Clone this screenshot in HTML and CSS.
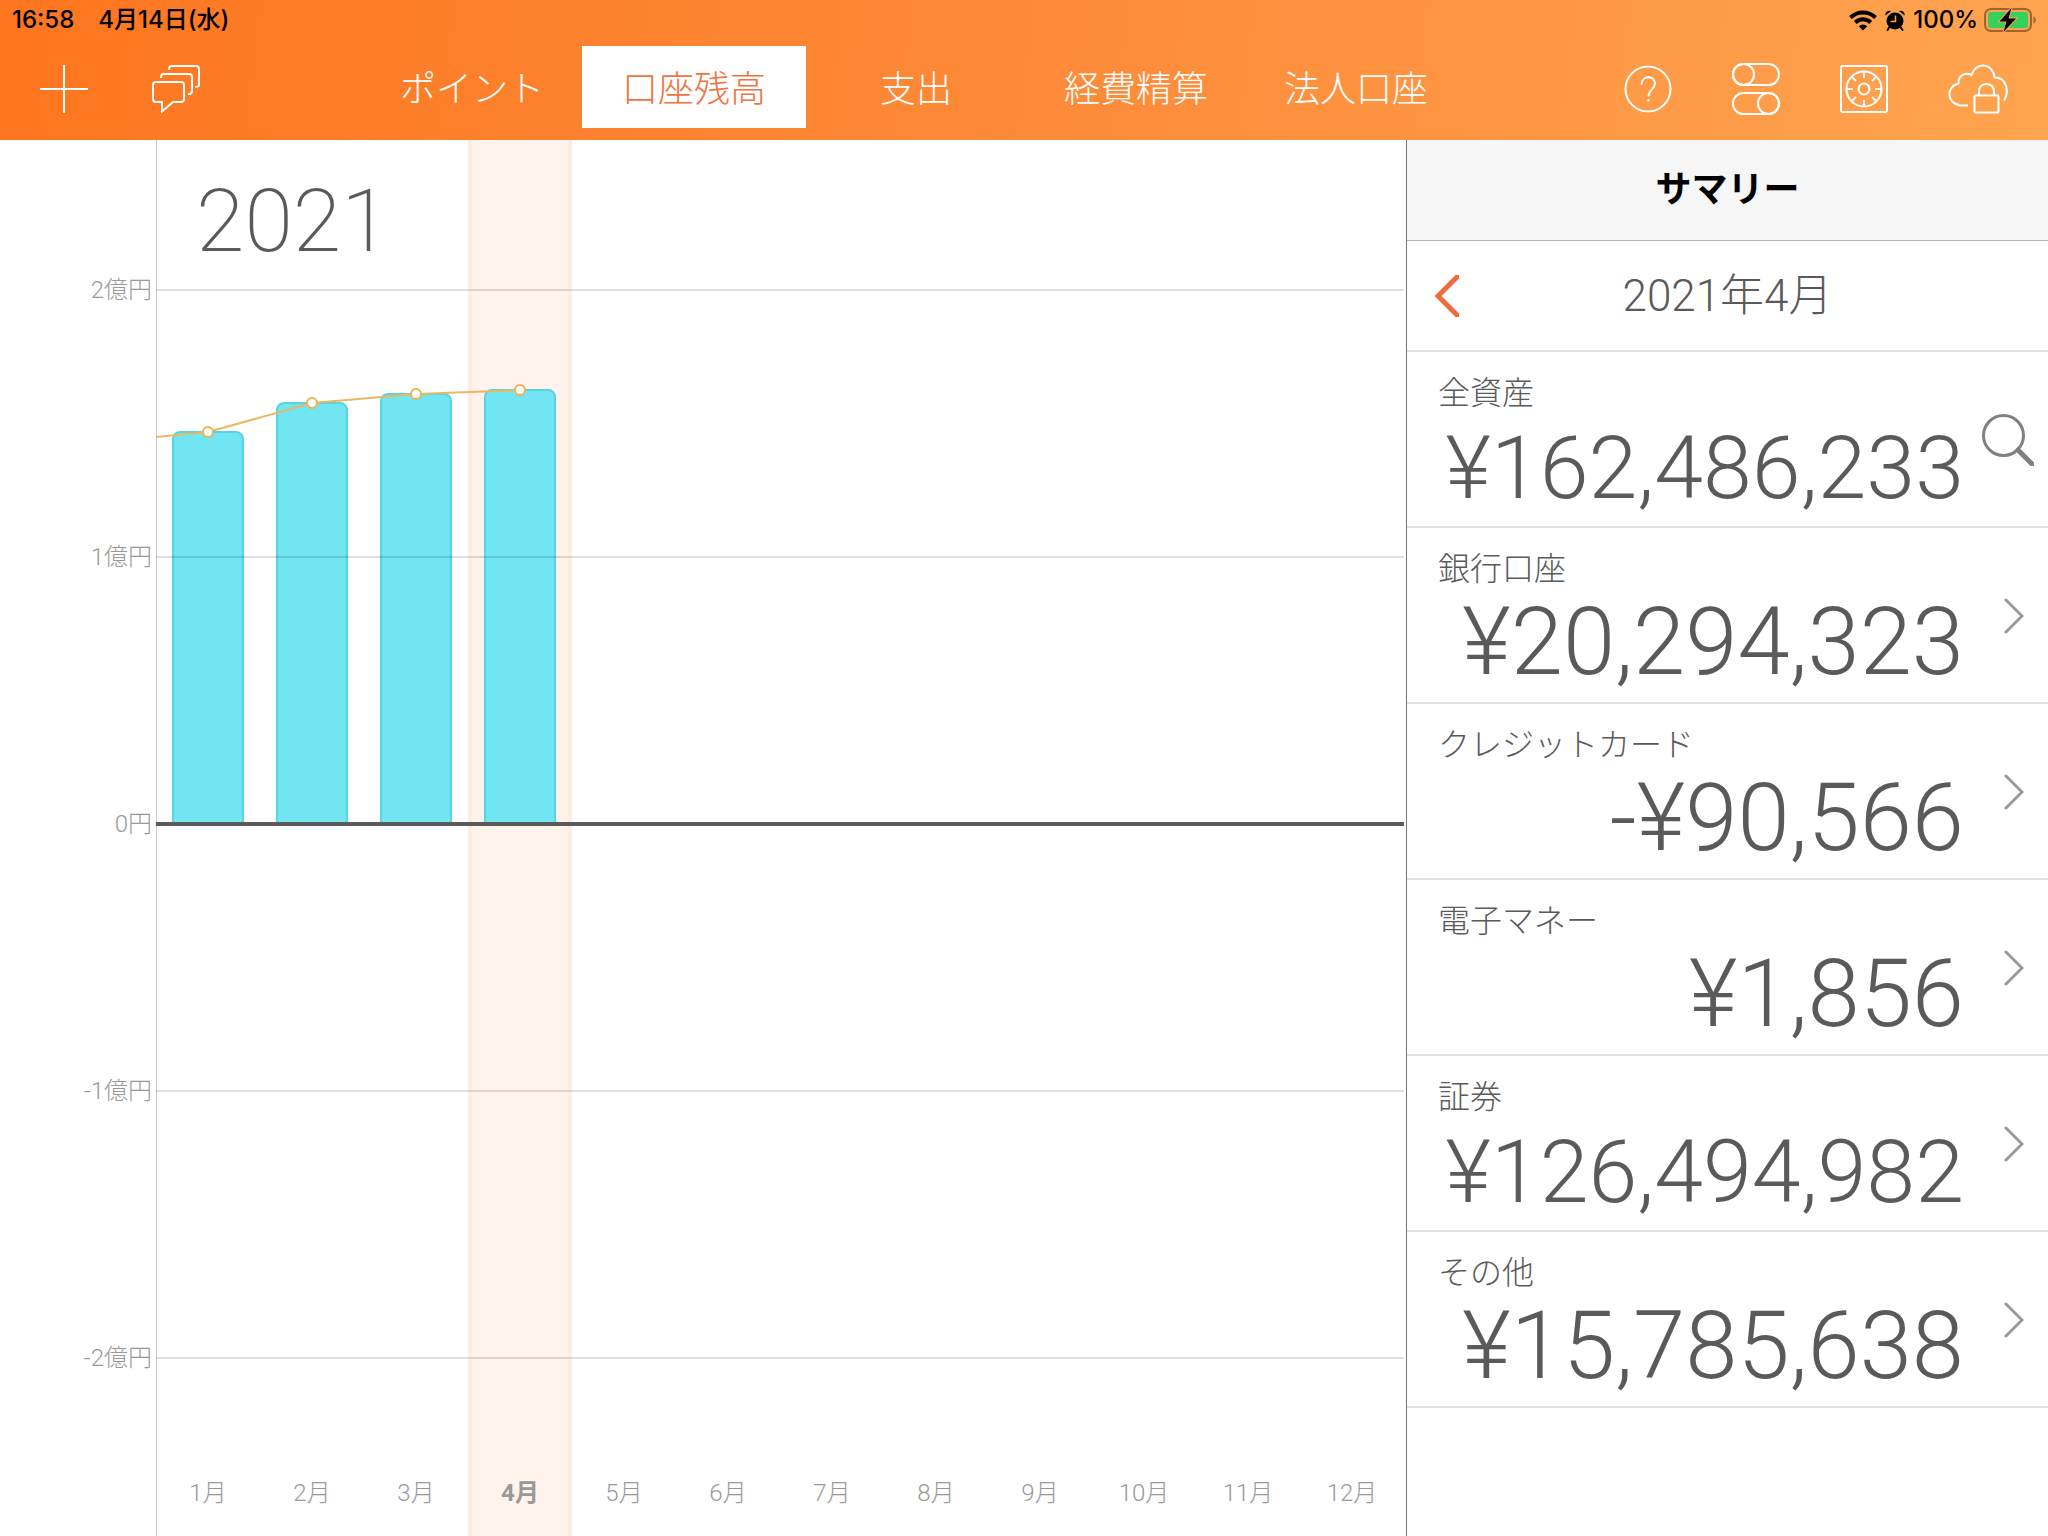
FILE: index.html
```html
<!DOCTYPE html>
<html lang="ja">
<head>
<meta charset="utf-8">
<meta name="viewport" content="width=device-width, initial-scale=1">
<title>口座残高</title>
<link rel="stylesheet" href="styles.css">
</head>
<body>
<header class="topbar">
  <div class="status">
    <div class="status-group status-left"><span>16:58</span><span>4月14日(水)</span></div>
    <div class="status-group">
      <svg class="wifi" viewBox="0 0 28 21" aria-hidden="true"><g fill="none" stroke="#000" stroke-width="4"><path d="M1.5 7.5a18 18 0 0 1 25 0"/><path d="M6.3 12.5a11 11 0 0 1 15.4 0"/></g><path d="M14 20.500l-4.200-4.200a6 6 0 0 1 8.400 0z"/></svg>
      <svg class="alarm" viewBox="0 0 20 21" aria-hidden="true"><circle cx="10" cy="11" r="8.500"/><path d="M0.500 5.500A4 4 0 0 1 6 1zM19.500 5.500A4 4 0 0 0 14 1z"/><path d="M4.500 17l-2 3M15.500 17l2 3" stroke="#000" stroke-width="2" stroke-linecap="round"/><path d="M10.500 5.500v6H5.500" fill="none" stroke="#ffa04c" stroke-width="1.500"/></svg>
      <span>100%</span>
      <svg class="battery" viewBox="0 0 54 26" aria-hidden="true"><rect x="1" y="2" width="46" height="22" rx="6" fill="none" stroke="#9c6430" stroke-width="2"/><rect x="4" y="5" width="40" height="16" rx="3" fill="#35cf5b"/><path d="M49.500 9.500c3 1 3 6 0 7z" fill="#9c6430"/><path d="M27.500 1L15.500 14.500h7L19.500 25 32 11.500h-7.500z" stroke="#ffa24e" stroke-width="2" paint-order="stroke"/></svg>
    </div>
  </div>
  <div class="toolbar">
    <div class="tools tools-left">
      <button class="tool" type="button" aria-label="追加"><svg width="48" height="48" viewBox="0 0 48 48"><path d="M24 0v48M0 24h48"/></svg></button>
      <button class="tool tool-chat" type="button" aria-label="メッセージ"><svg width="48" height="48" viewBox="0 0 48 48"><path d="M4 17h25a3 3 0 0 1 3 3v14a3 3 0 0 1-3 3h-8L10 46.500V37H4a3 3 0 0 1-3-3V20a3 3 0 0 1 3-3zM9 13v-1a3 3 0 0 1 3-3h25a3 3 0 0 1 3 3v14a3 3 0 0 1-3 3h-1M17 5V4a3 3 0 0 1 3-3h24a3 3 0 0 1 3 3v15a3 3 0 0 1-3 3h-1"/></svg></button>
    </div>
    <nav class="tabs">
      <a class="tab" href="#point">ポイント</a>
      <a class="tab tab-on" href="#balance" aria-current="page">口座残高</a>
      <a class="tab" href="#spend">支出</a>
      <a class="tab" href="#expense">経費精算</a>
      <a class="tab" href="#corporate">法人口座</a>
    </nav>
    <div class="tools tools-right">
      <button class="tool" type="button" aria-label="ヘルプ"><svg width="48" height="52" viewBox="0 0 48 52"><circle cx="24" cy="26" r="22.500"/><path d="M17.500 21.500c0-9.500 13.500-9.500 13.500-1 0 5.500-6.500 6.500-6.500 13M24.500 36v2.500"/></svg></button>
      <button class="tool" type="button" aria-label="設定"><svg width="48" height="52" viewBox="0 0 48 52"><rect x="1" y="1" width="46" height="21" rx="10.500"/><circle cx="11.500" cy="11.500" r="10.500"/><rect x="1" y="30" width="46" height="21" rx="10.500"/><circle cx="36.500" cy="40.500" r="10.500"/></svg></button>
      <button class="tool" type="button" aria-label="金庫"><svg width="48" height="52" viewBox="0 0 48 52"><rect x="1" y="3" width="46" height="46" rx="2"/><circle cx="24" cy="26" r="17.500"/><circle cx="24" cy="26" r="5.500"/><path d="M24 9v6M24 37v6M7 26h6M35 26h6M12 14l4 4M32 34l4 4M12 38l4-4M32 18l4-4"/></svg></button>
      <button class="tool" type="button" aria-label="クラウドロック"><svg width="60" height="52" viewBox="0 0 60 52"><path d="M20 42.500H13C-2 41-2 23 10.500 20.500 10 12 18 9 23.500 12 27-1 45-1 46.500 14.500 58 14 62 28 56 37.500"/><rect x="26.500" y="32.500" width="24" height="17" rx="1"/><path d="M31 32v-4c0-9.500 15-9.500 15 0v4"/></svg></button>
    </div>
  </div>
</header>
<main class="content">
  <section class="chart" aria-label="2021年の口座残高">
    <ol class="scale">
      <li>2億円</li><li>1億円</li><li>0円</li><li>-1億円</li><li>-2億円</li>
    </ol>
    <svg class="plot" viewBox="0 0 1248 1396" preserveAspectRatio="none" aria-hidden="true">
      <rect x="312" y="0" width="104" height="1396" fill="#fff3eb"/>
      <path d="M314 0V1396M414 0V1396" stroke="#ffeade" stroke-width="3"/>
      <path d="M.5 0V1396" stroke="#ccc"/>
      <g fill="#71e5f1" stroke="#58d3e2" stroke-width="2">
        <path d="M17 684V299a7 7 0 0 1 7-7h56a7 7 0 0 1 7 7V684"/>
        <path d="M121 684V270a7 7 0 0 1 7-7h56a7 7 0 0 1 7 7V684"/>
        <path d="M225 684V261a7 7 0 0 1 7-7h56a7 7 0 0 1 7 7V684"/>
        <path d="M329 684V257a7 7 0 0 1 7-7h56a7 7 0 0 1 7 7V684"/>
      </g>
      <path d="M0 150H1248M0 417H1248M0 951H1248M0 1218H1248" stroke="#000" stroke-opacity=".12" stroke-width="2"/>
      <path d="M0 684H1248" stroke="#5a5a5a" stroke-width="4"/>
      <path d="M0 297L52 292 156 263 260 254 364 250" fill="none" stroke="#eab765" stroke-width="2"/>
      <g fill="#fff" stroke="#eeb154" stroke-width="2"><circle cx="52" cy="292" r="5"/><circle cx="156" cy="263" r="5"/><circle cx="260" cy="254" r="5"/><circle cx="364" cy="250" r="5"/></g>
    </svg>
    <h1 class="year">2021</h1>
    <ol class="months">
      <li>1月</li><li>2月</li><li>3月</li><li class="now">4月</li><li>5月</li><li>6月</li><li>7月</li><li>8月</li><li>9月</li><li>10月</li><li>11月</li><li>12月</li>
    </ol>
  </section>
  <aside class="summary">
    <h2 class="summary-title">サマリー</h2>
    <div class="period">
      <button class="back" type="button" aria-label="前の月"><svg width="24" height="42" viewBox="0 0 24 42"><path d="M22 2L3 21l19 19"/></svg></button>
      <span class="period-name">2021年4月</span>
    </div>
    <a class="row" href="#all"><span class="name">全資産</span><span class="amount"><span class="long">¥162,486,233</span></span><svg class="mark lens" width="52" height="52" viewBox="0 0 52 52"><circle cx="21.500" cy="21.500" r="20"/><path d="M36 36l14 14" stroke-width="5"/></svg></a>
    <a class="row" href="#bank"><span class="name">銀行口座</span><span class="amount">¥20,294,323</span><svg class="mark" width="20" height="36" viewBox="0 0 20 36"><path d="M2 2l16 16L2 34"/></svg></a>
    <a class="row" href="#card"><span class="name">クレジットカード</span><span class="amount">-¥90,566</span><svg class="mark" width="20" height="36" viewBox="0 0 20 36"><path d="M2 2l16 16L2 34"/></svg></a>
    <a class="row" href="#emoney"><span class="name">電子マネー</span><span class="amount">¥1,856</span><svg class="mark" width="20" height="36" viewBox="0 0 20 36"><path d="M2 2l16 16L2 34"/></svg></a>
    <a class="row" href="#stock"><span class="name">証券</span><span class="amount"><span class="long">¥126,494,982</span></span><svg class="mark" width="20" height="36" viewBox="0 0 20 36"><path d="M2 2l16 16L2 34"/></svg></a>
    <a class="row" href="#other"><span class="name">その他</span><span class="amount">¥15,785,638</span><svg class="mark" width="20" height="36" viewBox="0 0 20 36"><path d="M2 2l16 16L2 34"/></svg></a>
  </aside>
</main>
</body>
</html>
```
FILE: styles.css
```css
* { box-sizing: border-box; }

body {
  margin: 0;
  min-height: 100vh;
  display: flex;
  flex-direction: column;
  background: #fff;
  color: #5a5a5a;
  font-family: Roboto, "Noto Sans CJK JP", sans-serif;
  font-weight: 300;
}

ol, h1, h2 { margin: 0; padding: 0; list-style: none; font-weight: inherit; }
a { color: inherit; text-decoration: none; }
button { padding: 0; border: 0; background: none; color: inherit; font: inherit; }
svg { display: block; }

/* Top bar */
.topbar {
  height: 140px;
  background: linear-gradient(97deg, #fe761f, #fd8a38 50%, #ffa450);
}

.status {
  display: flex;
  justify-content: space-between;
  height: 40px;
  padding: 0 10px 0 12px;
  color: #000;
  font: 500 24px/40px Inter, "Noto Sans CJK JP", sans-serif;
}
.status-group { display: flex; align-items: center; gap: 8px; }
.status-left { gap: 24px; }
.wifi { width: 28px; height: 21px; }
.alarm { width: 20px; height: 21px; }
.battery { width: 54px; height: 26px; margin-left: -2px; }

.toolbar {
  display: flex;
  align-items: center;
  justify-content: space-between;
  height: 98px;
  padding: 0 40px;
}
.tools { display: flex; align-items: center; }
.tools-left { gap: 64px; }
.tools-right { gap: 60px; }
.tool svg { fill: none; stroke: #fff; stroke-width: 2; }
.tool-chat { width: 52px; }

.tabs {
  display: flex;
  margin-bottom: 4px;
  color: #fff;
  font-size: 36px;
  line-height: 76px;
  text-align: center;
}
.tab { width: 220px; padding-top: 6px; }
.tab-on { width: 224px; background: #fff; color: #ee7440; }

/* Chart */
.content { flex: 1; display: grid; grid-template-columns: minmax(0, 1fr) 642px; }

.chart {
  display: grid;
  grid-template-columns: 156px minmax(0, 1fr);
  grid-template-rows: minmax(0, 1fr);
  min-height: 700px;
  padding-right: 2px;
  color: #999;
  font-size: 24px;
}
.scale {
  display: grid;
  grid-template-rows: repeat(5, 267fr);
  grid-area: 1 / 1;
  align-items: center;
  padding: 14px 4px 47px 0;
  text-align: right;
}
.plot { grid-area: 1 / 2; width: 100%; height: 100%; }
.year {
  grid-area: 1 / 2;
  align-self: start;
  padding: 29px 40px;
  color: #5a5a5a;
  font-size: 88px;
  font-weight: 200;
  line-height: 104px;
}
.months {
  grid-area: 1 / 2;
  align-self: end;
  display: grid;
  grid-template-columns: repeat(12, 1fr);
  padding-bottom: 23px;
  line-height: 40px;
  text-align: center;
}
.now { font-weight: 700; }

/* Summary */
.summary { border-left: 1px solid #777; }
.summary-title {
  height: 101px;
  border-bottom: 1px solid #b2b2b2;
  background: #f6f6f6;
  color: #000;
  font-size: 36px;
  font-weight: 700;
  line-height: 100px;
  text-align: center;
}
.period {
  display: grid;
  grid-template-columns: 24px 1fr 24px;
  align-items: center;
  height: 111px;
  padding: 0 28px;
  border-bottom: 2px solid #e4e4e4;
  font-size: 44px;
  line-height: 52px;
  text-align: center;
}
.back svg { fill: none; stroke: #ee6c3c; stroke-width: 5; stroke-linecap: round; }
.row {
  display: grid;
  grid-template-columns: 1fr 70px;
  grid-template-rows: 46px 94px;
  height: 176px;
  padding: 18px 14px 16px 31px;
  border-bottom: 2px solid #e4e4e4;
}
.name { grid-area: 1 / 1; font-size: 32px; line-height: 46px; }
.amount {
  grid-area: 2 / 1;
  font-size: 94px;
  line-height: 100px;
  text-align: right;
  white-space: nowrap;
}
.long { font-size: 88px; }
.mark {
  grid-area: 1 / 2 / 3 / 3;
  align-self: center;
  justify-self: end;
  margin-right: 10px;
  fill: none;
  stroke: #999;
  stroke-width: 3;
  stroke-linecap: round;
}
.lens { margin-right: 0; stroke: #808080; }
```
